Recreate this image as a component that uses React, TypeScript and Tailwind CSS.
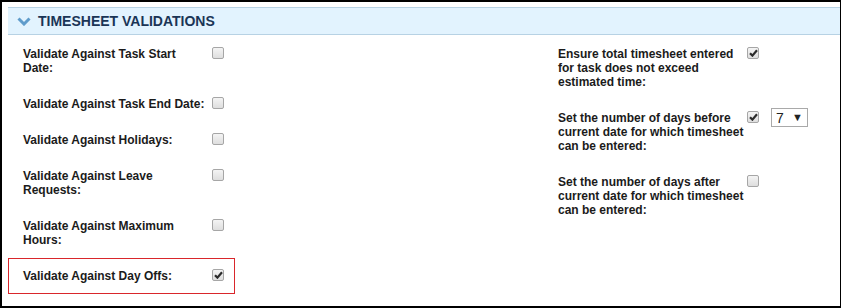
import { ReactNode } from 'react'

function Checkbox({ checked }: { checked?: boolean }) {
    return (
        <span className="mt-[-1px] flex h-[12px] w-[12px] shrink-0 items-center justify-center rounded-[2px] border border-[#a6a6a6] bg-gradient-to-b from-[#f4f4f4] to-[#dedede]">
            {checked && (
                <svg width="9" height="8" viewBox="0 0 9 8">
                    <path d="M1 4.2 L3.4 6.6 L8 1.2" fill="none" stroke="#2b2b2b" strokeWidth="2.2" />
                </svg>
            )}
        </span>
    )
}

function Row({ label, checked, extra, highlight }: { label: string; checked?: boolean; extra?: ReactNode; highlight?: boolean }) {
    return (
        <div
            className={`flex items-start border py-[10px] pl-[14px] ${highlight ? 'border-[#d9262b]' : 'border-transparent'}`}
        >
            <div className="w-[186px] text-[12px] font-bold leading-[14px] text-[#1b1b1b]">{label}</div>
            <div className="ml-[3px] pt-[1px]">
                <Checkbox checked={checked} />
            </div>
            {extra}
        </div>
    )
}

function DaysSelect() {
    return (
        <div className="mt-[-3px] ml-[12px] flex h-[19px] w-[37px] items-center justify-between border border-[#a9a9a9] bg-white pl-[4px] pr-[4px] text-[14px] leading-none text-[#222]">
            <span>7</span>
            <span className="text-[11px]">▼</span>
        </div>
    )
}

export default function App() {
    return (
        <div
            className="h-[308px] w-[841px] border-t-2 border-r border-b-2 border-l-2 border-black bg-white pt-[5px] pl-[6px]"
            style={{ fontFamily: '"Liberation Sans", Arial, sans-serif' }}
        >
            <div className="flex h-[28px] items-center border-y border-[#b7d2e4] bg-[#e2f3fe]">
                <svg className="ml-[9px]" width="14" height="9" viewBox="0 0 14 9">
                    <polyline points="1.5,1.5 7,7 12.5,1.5" fill="none" stroke="#5f9ccb" strokeWidth="3" />
                </svg>
                <h2 className="ml-[7px] text-[14px] font-bold text-[#1a3556]">TIMESHEET VALIDATIONS</h2>
            </div>

            <div className="flex">
                <div className="w-[227px] pt-[1px]">
                    <Row label="Validate Against Task Start Date:" />
                    <Row label="Validate Against Task End Date:" />
                    <Row label="Validate Against Holidays:" />
                    <Row label="Validate Against Leave Requests:" />
                    <Row label="Validate Against Maximum Hours:" />
                    <Row label="Validate Against Day Offs:" checked highlight />
                </div>
                <div className="ml-[308px] w-[290px] pt-[1px]">
                    <Row label="Ensure total timesheet entered for task does not exceed estimated time:" checked />
                    <Row
                        label="Set the number of days before current date for which timesheet can be entered:"
                        checked
                        extra={<DaysSelect />}
                    />
                    <Row label="Set the number of days after current date for which timesheet can be entered:" />
                </div>
            </div>
        </div>
    )
}
